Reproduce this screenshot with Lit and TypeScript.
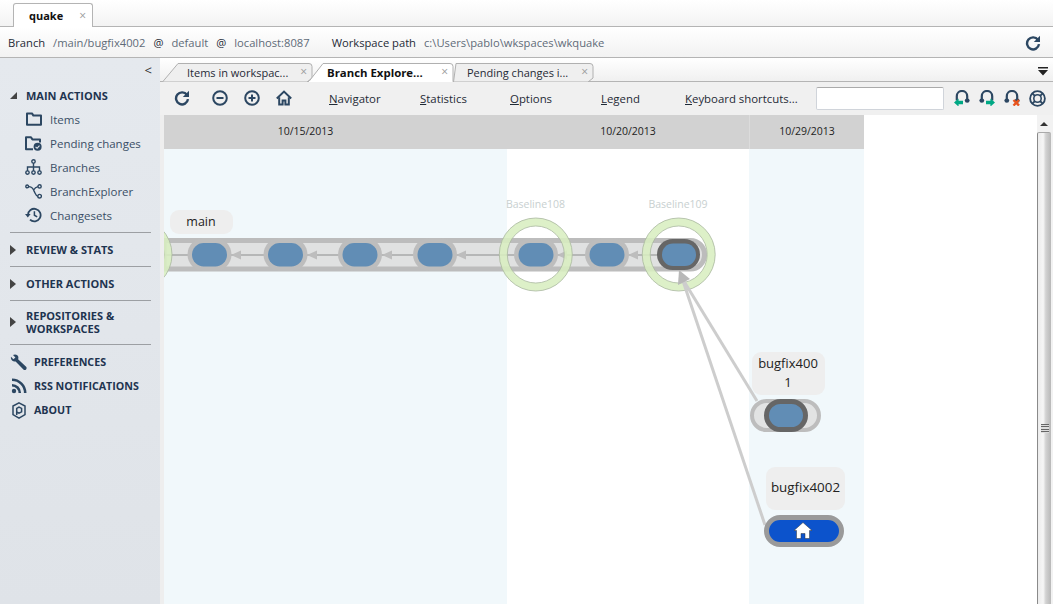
import { LitElement, html, css, svg } from "lit";
import { customElement } from "lit/decorators.js";

const NAVY = "#2c4762";
const TEAL = "#00a884";
const refresh = html`<svg width="16" height="16" viewBox="0 0 16 16" fill="none" stroke=${NAVY} stroke-width="2.4"><path d="M13 5A6 6 0 1 0 14 9.200"/><path d="M15 .8v6.200H8.800z" fill=${NAVY} stroke="none"/></svg>`;
const zoom = (plus: boolean) => html`<svg width="16" height="16" viewBox="0 0 16 16" fill="none" stroke=${NAVY} stroke-width="2"><circle cx="8" cy="8" r="6.800"/><path d="M4.500 8h7"/>${plus ? svg`<path d="M8 4.500v7"/>` : ""}</svg>`;
const home = html`<svg width="16" height="16" viewBox="0 0 16 16" fill="none" stroke=${NAVY} stroke-width="2"><path d="M.8 8.400 8 1.600l7.200 6.800"/><path d="M3.200 7.200V14.600h3.400v-4.200h2.800v4.200h3.400V7.200"/></svg>`;
const headset = (kind: string) => html`<svg width="16" height="16" viewBox="0 0 16 16" fill="none">
  <path d="M2.800 10.500V6.200a5.200 5.200 0 0 1 10.400 0v4.300" stroke=${NAVY} stroke-width="2.200"/>
  ${kind !== "left" ? svg`<ellipse cx="2.800" cy="10.600" rx="2.400" ry="2.200" fill=${NAVY}/>` : ""}
  ${kind !== "right" ? svg`<ellipse cx="13.200" cy="10.600" rx="2.400" ry="2.200" fill=${NAVY}/>` : ""}
  ${kind === "left" ? svg`<path d="M0 12.500 4.600 8.400v2.400H9v3.400H4.600v2.400z" fill=${TEAL}/>` : ""}
  ${kind === "right" ? svg`<path d="M16 12.500 11.400 8.400v2.400H7v3.400h4.400v2.400z" fill=${TEAL}/>` : ""}
  ${kind === "x" ? svg`<path d="M9.500 10l5.500 5.500m0-5.500-5.500 5.500" stroke="#e8541e" stroke-width="2.400"/>` : ""}
</svg>`;
const lifebuoy = html`<svg width="17" height="17" viewBox="0 0 17 17" fill="none" stroke=${NAVY}><circle cx="8.500" cy="8.500" r="7.400" stroke-width="1.800"/><circle cx="8.500" cy="8.500" r="3.700" stroke-width="1.600"/><path d="M3.300 3.300 6 6M13.700 3.300 11 6M3.300 13.700 6 11M13.700 13.700 11 11" stroke-width="1.800"/></svg>`;

const icons: Record<string, unknown> = {
  folder: html`<svg width="16" height="14" viewBox="0 0 16 14" fill="none" stroke=${NAVY} stroke-width="2"><path d="M1 12.800V1.400h5l1.400 2.200H15v9.200z" stroke-linejoin="round"/></svg>`,
  pending: html`<svg width="17" height="15" viewBox="0 0 17 15" fill="none" stroke=${NAVY} stroke-width="2"><path d="M8 13.200H1V1.200h5l1.400 2.200H15v3" stroke-linejoin="round"/><circle cx="12.600" cy="10.800" r="4" fill=${NAVY} stroke="none"/><path d="M10.600 10.800l1.500 1.500 2.400-2.700" stroke="#e4e8ee" stroke-width="1.100"/></svg>`,
  branches: html`<svg width="17" height="16" viewBox="0 0 17 16" fill="none" stroke=${NAVY} stroke-width="1.400"><circle cx="8.500" cy="2.400" r="1.700"/><path d="M8.500 4v8M2.500 12V8h12v4"/><circle cx="2.500" cy="13.600" r="1.700"/><circle cx="8.500" cy="13.600" r="1.700"/><circle cx="14.500" cy="13.600" r="1.700"/></svg>`,
  explorer: html`<svg width="17" height="15" viewBox="0 0 17 15" fill="none" stroke=${NAVY} stroke-width="1.400"><circle cx="2.200" cy="2.400" r="1.400"/><circle cx="14.600" cy="2.400" r="1.600"/><circle cx="14.600" cy="12.200" r="1.800"/><path d="M3.600 2.600C8 2.600 8 5 9.200 7.400S11 12 12.800 12.200M13 2.600c-2.400.4-3.400 1.600-4.400 3.400"/></svg>`,
  history: html`<svg width="17" height="16" viewBox="0 0 17 16" fill="none" stroke=${NAVY} stroke-width="1.800"><path d="M3 8a6.300 6.300 0 1 1 2 4.700"/><path d="M0 7h5.600L2.800 10.400z" fill=${NAVY} stroke="none"/><path d="M9.400 4.200v4l2.800 1.600" stroke-width="1.500"/></svg>`,
  wrench: html`<svg width="17" height="17" viewBox="0 0 17 17" fill=${NAVY}><path d="M1 2.800 3.400 5.200 5.400 3.400 3 1C5-.2 7.600.6 8.200 2.600c.3 1 .2 1.800-.1 2.600l8 7.600c.8.800.6 1.800 0 2.600-.8.800-1.900.9-2.700 0L5.600 7.400C3.400 8.200.2 6 1 2.800z"/></svg>`,
  rss: html`<svg width="16" height="16" viewBox="0 0 16 16" fill="none" stroke=${NAVY} stroke-width="2.600"><circle cx="3" cy="13" r="2.200" fill=${NAVY} stroke="none"/><path d="M1 7.200A7.800 7.800 0 0 1 8.800 15M1 1.800A13.200 13.200 0 0 1 14.200 15"/></svg>`,
  about: html`<svg width="14" height="17" viewBox="0 0 14 17" fill="none" stroke=${NAVY} stroke-width="1.500"><path d="M7 .9 13 4v8.600l-6 3.500-6-3.500V4z"/><path d="M4.700 13V6.400L7 5l2.600 1.400v3.400L7 11.200 4.700 10"/></svg>`,
};

const tabShape = (w: number, slant: number, fill: string) => svg`<svg class="tab-bg" width=${w} height="19" viewBox="0 0 ${w} 19">
  <path d="M.5 19 L${slant} .5 H${w - 4} Q${w - 1} .5 ${w - 1} 3.500 V${fill === "#fff" ? 19 : 15} ${fill === "#fff" ? "" : "L" + (w - 6) + " 19"}Z" fill=${fill} stroke="#b0b0b0"/>
  ${fill === "#fff" ? svg`<path d="M1 19H${w - 1.500}" stroke="#fff" stroke-width="2"/>` : ""}
</svg>`;

@customElement("app-root")
export class AppRoot extends LitElement {
  static styles = css`
    :host { display: flex; flex-direction: column; width: 1053px; height: 604px; overflow: hidden; background: #fff; color: #1f2a36; font: 11.5px "Open Sans", "Noto Sans", sans-serif; }
    .titlebar { height: 26px; flex: none; display: flex; align-items: flex-end; padding-left: 13px; background: linear-gradient(#fff, #f3f3f3); border-bottom: 1px solid #b4b4b4; }
    .doc-tab { width: 80px; height: 24px; margin-bottom: -1px; box-sizing: border-box; display: flex; align-items: center; justify-content: space-between; padding: 0 6px 0 15px; background: #fff; border: 1px solid #b4b4b4; border-bottom: 0; border-radius: 3px 3px 0 0; font-weight: 700; font-size: 11px; color: #111; }
    .x { color: #9a9a9a; font-size: 12px; font-weight: 400; line-height: 1; }
    .infobar { height: 31px; flex: none; display: flex; align-items: center; gap: 8px; padding: 1px 12px 0 8px; box-sizing: border-box; background: linear-gradient(#fff, #f2f2f2); border-bottom: 1px solid #b4b4b4; white-space: pre; font-size: 11.200px; }
    .muted { color: #5f6b78; }
    .ws { margin-left: 14px; }
    .spacer { flex: 1; }
    .body { flex: 1; min-height: 0; display: flex; }
    aside { width: 160px; flex: none; box-sizing: border-box; background: linear-gradient(#e5e9ee, #dfe3e8); padding: 6px 0 0 0; color: #24384f; }
    .collapse { text-align: right; padding-right: 8px; height: 15px; font-size: 13px; line-height: 13px; color: #333; }
    .section { display: flex; align-items: center; font-weight: 700; font-size: 11px; line-height: 13px; color: #1e3450; padding: 10px 0 10px 10px; gap: 10px; }
    .section.tight { padding-top: 8px; padding-bottom: 9px; }
    .tri { flex: none; width: 6px; }
    .tri svg { display: block; }
    .section.main-sec { padding: 0 0 0 10px; margin-top: 8px; height: 16px; }
    .items { display: flex; flex-direction: column; margin-top: 4px; padding-left: 25px; }
    .item { height: 24px; display: flex; align-items: center; gap: 8px; color: #3a4f66; }
    .item .ic { width: 17px; display: flex; justify-content: center; }
    hr { border: 0; border-top: 1px solid #9c9fa3; margin: 0 9px 0 10px; height: 0; }
    .gap5 { height: 5px; }
    .foot { height: 24px; display: flex; align-items: center; padding-left: 10px; gap: 7px; font-weight: 700; font-size: 10.700px; color: #1e3450; }
    .foot .ic { width: 17px; display: flex; justify-content: center; }
    main { flex: 1; min-width: 0; display: flex; flex-direction: column; background: #eeeeee; }
    .tabs { height: 24px; flex: none; display: flex; align-items: flex-end; padding-left: 2px; background: linear-gradient(#fff, #f0f0f0); border-bottom: 1px solid #b4b4b4; box-sizing: border-box; }
    .tab { position: relative; height: 19px; margin-bottom: -1px; box-sizing: border-box; display: flex; align-items: center; justify-content: space-between; padding: 0 6px 1px 25px; font-size: 11px; white-space: pre; }
    .tab-bg { position: absolute; left: 0; top: 0; }
    .tab > span { position: relative; }
    .tab.one { width: 151px; }
    .tab.two { width: 146px; margin-left: -5px; font-weight: 700; font-size: 11.400px; color: #111; padding-left: 19px; order: 2; }
    .tab.three { width: 141px; margin-left: -1px; padding-left: 14px; order: 3; }
    .overflow { margin-left: auto; padding: 0 4px 5px 0; order: 4; }
    .overflow svg { display: block; }
    .toolbar { height: 33px; flex: none; display: flex; align-items: center; box-sizing: border-box; padding: 0 0 1px 14px; background: #f0f0f0; font-size: 11.400px; }
    .toolbar svg { display: block; }
    .tools { display: flex; align-items: center; gap: 16px; }
    .tools .first { margin-right: 6px; }
    .menu { display: flex; margin-left: 37px; }
    .menu span { white-space: pre; }
    .w-nav { width: 91px; }
    .w-stat { width: 90px; }
    .w-opt { width: 91px; }
    .w-leg { width: 84px; }
    .w-key { width: 131px; }
    .search { width: 128px; height: 23px; box-sizing: border-box; background: #fff; border: 1px solid #d0d4da; border-top-color: #aaa; border-radius: 2px; }
    .sup { display: flex; margin-left: 10px; gap: 9px; align-items: center; }
    .content { flex: 1; min-height: 0; display: flex; background: #fff; border-left: 4px solid #eeeeee; }
    .canvas { position: relative; flex: 1; min-width: 0; display: flex; align-items: stretch; }
    .col { display: flex; flex-direction: column; flex: none; }
    .col.w1 { width: 343px; }
    .col.w2 { width: 242px; }
    .col.w3 { width: 115px; }
    .date { height: 34px; flex: none; display: flex; align-items: center; justify-content: center; background: #d2d2d2; font-size: 10.500px; color: #222; padding-bottom: 2px; box-sizing: border-box; }
    .w1 .date { padding-right: 60px; }
    .w3 .date { border-left: 1px solid #dcdcdc; }
    .fill { flex: 1; }
    .tint { background: #f1f8fb; }
    .graph { position: absolute; inset: 0; width: 100%; height: 100%; }
    .graph text { font-family: "Open Sans", "Noto Sans", sans-serif; }
    .scroll { width: 16px; flex: none; box-sizing: border-box; background: #f2f2f2; display: flex; flex-direction: column; align-items: flex-start; }
    .arrow { height: 17px; width: 14px; flex: none; display: flex; align-items: center; justify-content: center; }
    .thumb { flex: 1; width: 14px; box-sizing: border-box; background: linear-gradient(90deg,#ececec,#f6f6f6 40%,#d2d2d2 60%,#b8b8b8); border-left: 1px solid #8a8a8a; border-top: 1px solid #aaa; border-radius: 2px 2px 0 0; display: flex; align-items: flex-start; justify-content: center; padding-top: 291px; }
    .grip { width: 8px; height: 9px; background: repeating-linear-gradient(#666 0 1px, #ddd 1px 2.500px); }
  `;

  private node(x: number) {
    return svg`<rect x=${x - 22} y="238" width="44" height="33" rx="16.500" fill="#bdbdbd"/>
      <rect x=${x - 17.500} y="243" width="35" height="23.500" rx="11.700" fill="#618db5"/>`;
  }
  private arrow(x: number) {
    return svg`<path d="M${x} 255l10-4.500v9z" fill="#bdbdbd"/>`;
  }
  private ring(x: number) {
    return svg`<circle cx=${x} cy="254.500" r="32.500" fill="none" stroke="#d8eec0" stroke-width="8" opacity=".88"/>
      <circle cx=${x} cy="254.500" r="36.500" fill="none" stroke="#a9b7a0" stroke-width=".8"/>
      <circle cx=${x} cy="254.500" r="28.500" fill="none" stroke="#a9b7a0" stroke-width=".8"/>`;
  }
  private label(x: number, y: number, w: number, h: number) {
    return svg`<rect x=${x} y=${y} width=${w} height=${h} rx="9" fill="#eeeeee"/>`;
  }

  private graph() {
    return html`<svg class="graph" viewBox="164 115 873 489">
      <path d="M164 240.500H690a14 14 0 0 1 14.500 14.500 14 14 0 0 1-14.500 14H164z" fill="#e0e1e1" stroke="#bcbcbc" stroke-width="5"/>
      <path d="M164 255H660" stroke="#a9a9a9" stroke-width="1.500"/>
      ${[209.500, 285.500, 360, 435, 536, 607].map((x) => this.node(x))}
      ${[231, 307, 382, 456, 557, 628].map((x) => this.arrow(x))}
      <rect x="657" y="239" width="43" height="31" rx="15.500" fill="#666"/>
      <rect x="662" y="243.500" width="34" height="22.500" rx="11" fill="#618db5"/>
      ${this.ring(135.500)}${this.ring(535.800)}${this.ring(678.700)}
      <text x="535.500" y="208" text-anchor="middle" font-size="10.500" fill="#c8d0d0">Baseline108</text>
      <text x="678" y="208" text-anchor="middle" font-size="10.500" fill="#c8d0d0">Baseline109</text>
      ${this.label(170, 210, 63, 24)}
      <text x="201" y="226" text-anchor="middle" font-size="12.500" fill="#222">main</text>

      <path d="M757 401 682 278" stroke="#cdcdcd" stroke-width="3"/>
      <path d="M765 525 682 278" stroke="#cdcdcd" stroke-width="3"/>
      <path d="M679 270 690 279 678 285z" fill="#b8b8b8"/>

      ${this.label(752, 352, 73, 43)}
      <text x="788" y="368" text-anchor="middle" font-size="13" fill="#222">bugfix400</text>
      <text x="788" y="387" text-anchor="middle" font-size="13" fill="#222">1</text>
      <rect x="752" y="401" width="67" height="29" rx="14.500" fill="#e2e3e3" stroke="#bdbdbd" stroke-width="4"/>
      <rect x="766.500" y="401.500" width="39" height="28" rx="14" fill="#618db5" stroke="#666" stroke-width="5"/>

      ${this.label(766, 467, 79, 43)}
      <text x="805.500" y="492" text-anchor="middle" font-size="13.400" fill="#222">bugfix4002</text>
      <rect x="766.500" y="517.500" width="75" height="27" rx="13.500" fill="#0c53cc" stroke="#9a9a9a" stroke-width="5"/>
      <path d="M803 522.500l9 8h-2.500v8h-4.500v-5h-4v5h-4.500v-8H794z" fill="#fff" stroke="#333" stroke-width=".5"/>
    </svg>`;
  }

  render() {
    const tri = (open: boolean) => open
      ? html`<span class="tri"><svg width="7" height="7"><path d="M0 7h7V0z" fill="#444"/></svg></span>`
      : html`<span class="tri"><svg width="6" height="10"><path d="M0 0l6 5-6 5z" fill="#444"/></svg></span>`;
    const items: [string, string][] = [["folder", "Items"], ["pending", "Pending changes"], ["branches", "Branches"], ["explorer", "BranchExplorer"], ["history", "Changesets"]];
    return html`
      <div class="titlebar"><div class="doc-tab">quake <span class="x">×</span></div></div>
      <div class="infobar">
        <span>Branch</span><span class="muted">/main/bugfix4002</span><span>@</span><span class="muted">default</span><span>@</span><span class="muted">localhost:8087</span>
        <span class="ws">Workspace path</span><span class="muted">c:\\Users\\pablo\\wkspaces\\wkquake</span>
        <span class="spacer"></span>${refresh}
      </div>
      <div class="body">
        <aside>
          <div class="collapse">&lt;</div>
          <div class="section main-sec">${tri(true)}MAIN ACTIONS</div>
          <div class="items">
            ${items.map(([i, t]) => html`<div class="item"><span class="ic">${icons[i]}</span>${t}</div>`)}
          </div>
          <div class="gap5"></div>
          <hr />
          <div class="section">${tri(false)}<span>REVIEW &amp; STATS</span></div>
          <hr />
          <div class="section">${tri(false)}<span>OTHER ACTIONS</span></div>
          <hr />
          <div class="section tight">${tri(false)}<span>REPOSITORIES &amp;<br />WORKSPACES</span></div>
          <hr />
          <div class="gap5"></div>
          <div class="foot"><span class="ic">${icons.wrench}</span>PREFERENCES</div>
          <div class="foot"><span class="ic">${icons.rss}</span>RSS NOTIFICATIONS</div>
          <div class="foot"><span class="ic">${icons.about}</span>ABOUT</div>
        </aside>
        <main>
          <div class="tabs">
            <div class="tab one">${tabShape(151, 16, "#efefef")}<span>Items in workspac...</span><span class="x">×</span></div>
            <div class="tab three">${tabShape(141, 3, "#efefef")}<span>Pending changes i...</span><span class="x">×</span></div>
            <div class="tab two">${tabShape(146, 15, "#fff")}<span>Branch Explore...</span><span class="x">×</span></div>
            <div class="overflow"><svg width="11" height="9"><path d="M0 0h10v1.500H0zM0 3h10L5 8.500z" fill="#222"/></svg></div>
          </div>
          <div class="toolbar">
            <div class="tools"><span class="first">${refresh}</span>${zoom(false)}${zoom(true)}${home}</div>
            <div class="menu">
              <span class="w-nav"><u>N</u>avigator</span>
              <span class="w-stat"><u>S</u>tatistics</span>
              <span class="w-opt"><u>O</u>ptions</span>
              <span class="w-leg"><u>L</u>egend</span>
              <span class="w-key"><u>K</u>eyboard shortcuts...</span>
            </div>
            <div class="search"></div>
            <div class="sup">${headset("left")}${headset("right")}${headset("x")}${lifebuoy}</div>
          </div>
          <div class="content">
            <div class="canvas">
              <div class="col w1"><div class="date">10/15/2013</div><div class="fill tint"></div></div>
              <div class="col w2"><div class="date">10/20/2013</div><div class="fill"></div></div>
              <div class="col w3"><div class="date">10/29/2013</div><div class="fill tint"></div></div>
              ${this.graph()}
            </div>
            <div class="scroll">
              <div class="arrow"><svg width="8" height="5"><path d="M0 5l4-4 4 4z" fill="#333"/></svg></div>
              <div class="thumb"><div class="grip"></div></div>
            </div>
          </div>
        </main>
      </div>
    `;
  }
}
